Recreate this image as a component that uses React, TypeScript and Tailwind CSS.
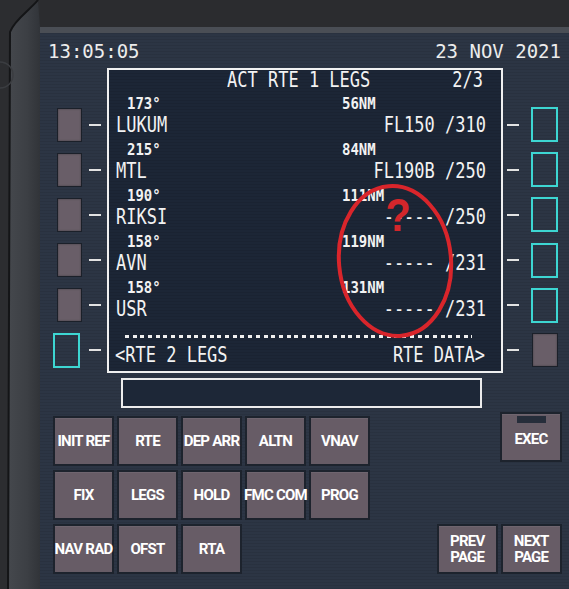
import React from "react";

const mono = "font-['DejaVu_Sans_Mono',monospace]";
const sans = "font-['Roboto',sans-serif]";

type Row = { crs: string; dist: string; wpt: string; alt: string };
const rows: Row[] = [
  { crs: "173°", dist: "56NM", wpt: "LUKUM", alt: "FL150 /310" },
  { crs: "215°", dist: "84NM", wpt: "MTL", alt: "FL190B /250" },
  { crs: "190°", dist: "111NM", wpt: "RIKSI", alt: "----- /250" },
  { crs: "158°", dist: "119NM", wpt: "AVN", alt: "----- /231" },
  { crs: "158°", dist: "131NM", wpt: "USR", alt: "----- /231" },
];

function GreyKey({ w = "w-[25px]" }: { w?: string }) {
  return <div className={`${w} h-[34px] bg-[#695e68] border border-[#1b2029] shadow-[inset_0_0_2px_rgba(0,0,0,0.4)]`} />;
}
function CyanKey() {
  return <div className="w-[27px] h-[35px] border-2 border-[#3dd6d2]" />;
}
function Dash() {
  return <div className="w-[12px] h-[2px] bg-[#e2e2e2]" />;
}

function Key({ label, w = "w-[61px]", exec = false }: { label: React.ReactNode; w?: string; exec?: boolean }) {
  return (
    <div
      className={`${w} h-[50px] bg-[#675c66] border-2 border-[#1d232d] flex flex-col items-center justify-center text-white text-[15px] font-bold leading-[17px] tracking-[-0.05em] text-center whitespace-nowrap ${sans} shadow-[inset_0_1px_0_rgba(255,255,255,0.06)]`}
    >
      {exec && <div className="w-[29px] h-[7px] bg-[#262d3a] mb-[8px] -mt-[10px]" />}
      {label}
    </div>
  );
}

function TwoLine({ a, b }: { a: string; b: string }) {
  return (
    <div className="flex flex-col items-center gap-[1px]">
      <span className="leading-[15px]">{a}</span>
      <span className="leading-[15px]">{b}</span>
    </div>
  );
}

export default function App() {
  return (
    <div className="w-[569px] h-[589px] flex bg-[#2b2c2f] overflow-hidden">
      {/* left bezel */}
      <div className="w-[40px] h-full shrink-0">
        <svg width="40" height="589" viewBox="0 0 40 589">
          <defs>
            <linearGradient id="bz" x1="0" y1="0" x2="1" y2="0">
              <stop offset="0" stopColor="#45484d" />
              <stop offset="0.6" stopColor="#3c3f44" />
              <stop offset="1" stopColor="#313439" />
            </linearGradient>
          </defs>
          <rect x="0" y="0" width="40" height="589" fill="#2c2d30" />
          <path d="M38 0 C30 10 14 20 10 32 L8 589 L40 589 L40 0 Z" fill="url(#bz)" />
          <path d="M40 0 L40 27 L38 0 Z" fill="#2c2d30" />
          <path d="M38 0 C30 10 14 20 10 32 L8 589" fill="none" stroke="#141517" strokeWidth="2" />
          <path d="M0 62 A 13 13 0 0 1 0 88" fill="none" stroke="#3b3d41" strokeWidth="1.5" />
        </svg>
      </div>

      <div className="flex-1 flex flex-col">
        <div className="h-[27px] bg-[#2b2c2f] shrink-0" />
        {/* panel */}
        <div className="flex-1 flex flex-col bg-[#2c3544] bg-[repeating-linear-gradient(0deg,rgba(0,0,0,0.07)_0px,rgba(0,0,0,0.07)_1px,transparent_1px,transparent_3px)] border-t-[6px] border-[#4a4e55]">
          {/* header */}
          <div className={`h-[35px] flex items-center justify-between pl-[8px] pr-[8px] text-[19px] text-[#ececec] ${mono}`}>
            <span className="scale-y-[1.05] pt-[1px]">13:05:05</span>
            <span className="scale-y-[1.05] pt-[1px]">23 NOV 2021</span>
          </div>

          {/* middle */}
          <div className="flex pl-[13px] h-[305px]">
            {/* left LSK column */}
            <div className="w-[48px] pt-[34px] flex flex-col">
              {[0, 1, 2, 3, 4, 5].map((i) => (
                <div key={i} className="h-[46px] flex items-center">
                  <div className="w-[29px] flex justify-end">
                    {i === 5 ? (
                      <div className="mr-[2px]">
                        <CyanKey />
                      </div>
                    ) : (
                      <GreyKey />
                    )}
                  </div>
                  <div className="ml-[7px]">
                    <Dash />
                  </div>
                </div>
              ))}
            </div>

            {/* screen */}
            <div className={`ml-[6px] w-[396px] h-[305px] border-2 border-[#f0f0f0] bg-[#1c2636] bg-[repeating-linear-gradient(0deg,rgba(0,0,0,0.08)_0px,rgba(0,0,0,0.08)_1px,transparent_1px,transparent_3px)] relative text-[#f2f2f2] ${mono}`}>
              <div className="h-[22px] flex items-center text-[17px] scale-y-[1.2]">
                <span className="pl-[118px]">ACT RTE 1 LEGS</span>
                <span className="flex-1" />
                <span className="pr-[18px]">2/3</span>
              </div>
              {rows.map((r) => (
                <div key={r.wpt} className="h-[46px]">
                  <div className="h-[22px] flex items-end text-[14px] font-bold scale-y-[1.15]">
                    <span className="pl-[18px] w-[233px]">{r.crs}</span>
                    <span>{r.dist}</span>
                  </div>
                  <div className="h-[24px] flex items-center justify-between pl-[7px] pr-[15px] text-[17px] scale-y-[1.22]">
                    <span>{r.wpt}</span>
                    <span className="whitespace-pre">{r.alt}</span>
                  </div>
                </div>
              ))}
              <div className="h-[46px]">
                <div className="h-[22px] flex items-end pb-[6px] pl-[16px] pr-[29px]">
                  <div className="w-full h-[3px] bg-[repeating-linear-gradient(90deg,#f0f0f0_0px,#f0f0f0_4px,transparent_4px,transparent_7.7px)]" />
                </div>
                <div className="h-[24px] flex items-center justify-between pl-[6px] pr-[16px] text-[17px] scale-y-[1.22]">
                  <span>&lt;RTE 2 LEGS</span>
                  <span>RTE DATA&gt;</span>
                </div>
              </div>

              {/* annotation overlay */}
              <svg className="absolute left-0 top-0" width="392" height="301" viewBox="0 0 392 301">
                <ellipse cx="286" cy="191" rx="56" ry="75" fill="none" stroke="#d9252b" strokeWidth="4" transform="rotate(-5 286 191)" />
              </svg>
              <span className="absolute left-[275px] top-[122px] text-[46px] leading-[46px] font-bold text-[#d3262b] font-['Liberation_Sans',sans-serif] scale-x-[0.9]">
                ?
              </span>
            </div>

            {/* right LSK column */}
            <div className="ml-[4px] w-[51px] pt-[34px] flex flex-col">
              {[0, 1, 2, 3, 4, 5].map((i) => (
                <div key={i} className="h-[46px] flex items-center">
                  <Dash />
                  {i === 5 ? (
                    <div className="ml-[13px]">
                      <GreyKey w="w-[26px]" />
                    </div>
                  ) : (
                    <div className="ml-[12px]">
                      <CyanKey />
                    </div>
                  )}
                </div>
              ))}
            </div>
          </div>

          {/* scratchpad */}
          <div className="mt-[5px] ml-[81px] w-[361px] h-[30px] border-2 border-[#ececec] bg-[#1d2737]" />

          {/* keys */}
          <div className="mt-[4px] flex pl-[13px] h-[162px]">
            <div className="pt-[4px] grid grid-cols-[repeat(5,61px)] auto-rows-[50px] gap-x-[3px] gap-y-[4px]">
              <Key label="INIT REF" />
              <Key label="RTE" />
              <Key label="DEP ARR" />
              <Key label="ALTN" />
              <Key label="VNAV" />
              <Key label="FIX" />
              <Key label="LEGS" />
              <Key label="HOLD" />
              <Key label="FMC COM" />
              <Key label="PROG" />
              <Key label="NAV RAD" />
              <Key label="OFST" />
              <Key label="RTA" />
            </div>
            <div className="ml-[67px] w-[125px] flex flex-col">
              <div className="self-end">
                <Key label="EXEC" w="w-[62px]" exec />
              </div>
              <div className="mt-auto flex gap-[3px]">
                <Key label={<TwoLine a="PREV" b="PAGE" />} />
                <Key label={<TwoLine a="NEXT" b="PAGE" />} w="w-[62px]" />
              </div>
            </div>
          </div>
        </div>
      </div>
    </div>
  );
}
